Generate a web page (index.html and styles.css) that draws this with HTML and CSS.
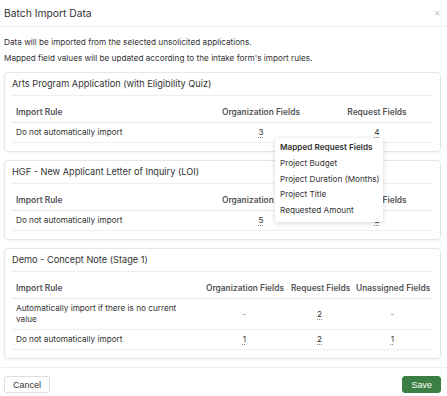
FILE: index.html
```html
<!DOCTYPE html>
<html lang="en">
<head>
    <meta charset="UTF-8">
    <meta name="viewport" content="width=device-width, initial-scale=1.0">
    <title>Batch Import Data</title>
    <link rel="stylesheet" href="styles.css">
</head>
<body>
    <div class="modal">
        <header class="modal-header">
            <h1>Batch Import Data</h1>
            <span class="close">&#x2715;</span>
        </header>
        <div class="modal-body">
            <p class="intro">Data will be imported from the selected unsolicited applications.</p>
            <p class="intro">Mapped field values will be updated according to the intake form's import rules.</p>

            <div class="card">
                <h2>Arts Program Application (with Eligibility Quiz)</h2>
                <table>
                    <colgroup>
                        <col>
                        <col class="col-org">
                        <col class="col-req">
                    </colgroup>
                    <thead>
                        <tr><th>Import Rule</th><th class="num">Organization Fields</th><th class="num">Request Fields</th></tr>
                    </thead>
                    <tbody>
                        <tr><td>Do not automatically import</td><td class="num"><span class="count">3</span></td><td class="num"><span class="count">4</span></td></tr>
                    </tbody>
                </table>
            </div>

            <div class="card">
                <h2>HGF - New Applicant Letter of Inquiry (LOI)</h2>
                <table>
                    <colgroup>
                        <col>
                        <col class="col-org">
                        <col class="col-req">
                    </colgroup>
                    <thead>
                        <tr><th>Import Rule</th><th class="num">Organization Fields</th><th class="num">Request Fields</th></tr>
                    </thead>
                    <tbody>
                        <tr><td>Do not automatically import</td><td class="num"><span class="count">5</span></td><td class="num"><span class="count">2</span></td></tr>
                    </tbody>
                </table>
            </div>

            <div class="card">
                <h2>Demo - Concept Note (Stage 1)</h2>
                <table>
                    <colgroup>
                        <col>
                        <col class="col-org3">
                        <col class="col-req3">
                        <col class="col-un3">
                    </colgroup>
                    <thead>
                        <tr><th>Import Rule</th><th class="num">Organization Fields</th><th class="num">Request Fields</th><th class="num">Unassigned Fields</th></tr>
                    </thead>
                    <tbody>
                        <tr><td>Automatically import if there is no current value</td><td class="num muted">-</td><td class="num"><span class="count">2</span></td><td class="num muted">-</td></tr>
                        <tr><td>Do not automatically import</td><td class="num"><span class="count">1</span></td><td class="num"><span class="count">2</span></td><td class="num"><span class="count">1</span></td></tr>
                    </tbody>
                </table>
            </div>
        </div>
        <footer class="modal-footer">
            <button class="btn">Cancel</button>
            <button class="btn btn-save">Save</button>
        </footer>

        <div class="popover">
            <div class="popover-title">Mapped Request Fields</div>
            <div>Project Budget</div>
            <div>Project Duration (Months)</div>
            <div>Project Title</div>
            <div>Requested Amount</div>
        </div>
    </div>
</body>
</html>
```

FILE: styles.css
```css
body {
    margin: 0;
    font-family: Inter, "Noto Sans", sans-serif;
    color: #333;
    background: #fff;
}

.modal {
    position: relative;
    width: 447px;
}

.modal-header {
    display: flex;
    justify-content: space-between;
    align-items: center;
    height: 27px;
    padding: 0 6px 0 4px;
    border-bottom: 1px solid #eee;
    box-sizing: border-box;
}

.modal-header h1 {
    margin: 0;
    font-size: 10.3px;
    font-weight: 400;
    color: #333;
}

.close {
    font-size: 8px;
    color: #c4c4c4;
}

.modal-body {
    padding: 7px 6px 0 4px;
}

.intro {
    margin: 0;
    font-size: 8.2px;
    line-height: 16px;
}

.intro + .intro {
    margin-bottom: 6px;
}

.card {
    border: 1px solid #e6e6e6;
    border-radius: 4px;
    box-shadow: 0 1px 3px rgba(0, 0, 0, 0.06);
    padding: 0 7px 8px;
    margin-bottom: 8px;
}

.card h2 {
    margin: 0 0 6px;
    height: 22px;
    line-height: 22px;
    font-size: 9.2px;
    font-weight: 400;
    border-bottom: 1px solid #eee;
}

table {
    width: 100%;
    border-collapse: collapse;
    table-layout: fixed;
    font-size: 8.2px;
}

.col-org { width: 120px; }
.col-req { width: 112px; }
.col-org3 { width: 85px; }
.col-req3 { width: 65px; }
.col-un3 { width: 81px; }

th {
    text-align: left;
    font-size: 8.4px;
    font-weight: 600;
    color: #555;
    height: 20px;
    padding: 0 4px;
    border-bottom: 1px solid #e8e8e8;
    white-space: nowrap;
}

td {
    padding: 4px;
    line-height: 11px;
    height: 11px;
    border-bottom: 1px solid #eee;
}

td:first-child {
    padding-right: 10px;
}

.num {
    text-align: center;
}

.muted {
    color: #888;
}

.count {
    text-decoration: underline dotted #888;
    text-underline-offset: 2px;
}

.modal-footer {
    display: flex;
    justify-content: space-between;
    align-items: center;
    border-top: 1px solid #eee;
    padding: 8px 6px 6px 4px;
}

.btn {
    font-family: "Liberation Sans", Arial, sans-serif;
    font-size: 9px;
    height: 17px;
    padding: 0 8px;
    background: #fff;
    color: #333;
    border: 1px solid #ddd;
    border-radius: 3px;
}

.btn-save {
    background: #3b7f45;
    border-color: #3b7f45;
    color: #fff;
}

.popover {
    position: absolute;
    left: 275px;
    top: 138px;
    width: 108px;
    padding: 2px 0 3px 5px;
    box-sizing: border-box;
    background: #fff;
    border-radius: 3px;
    box-shadow: 0 1px 5px rgba(0, 0, 0, 0.18);
    font-size: 8.2px;
    line-height: 15.8px;
    color: #333;
}

.popover-title {
    font-weight: 600;
}
```
